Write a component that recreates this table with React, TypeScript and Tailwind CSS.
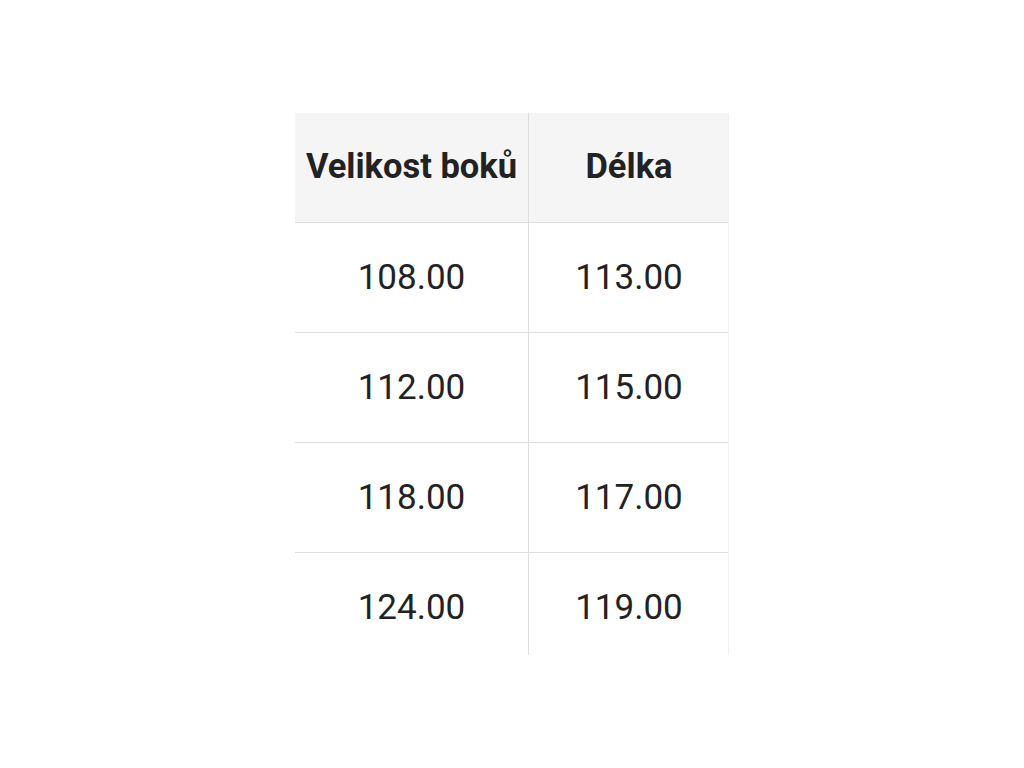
const HEAD = ['Velikost boků', 'Délka'];
const ROWS = [
  ['108.00', '113.00'],
  ['112.00', '115.00'],
  ['118.00', '117.00'],
  ['124.00', '119.00'],
];

export default function App() {
  return (
    <div className="flex h-[768px] w-full items-center justify-center bg-white font-['Roboto',sans-serif] text-[#222]">
      <div className="h-[542px] w-[434px] overflow-hidden border-r border-[#f0f0f0]">
        <div className="grid grid-cols-[234px_200px] border-b border-[#dedede] bg-[#f5f5f5]">
          {HEAD.map((h, i) => (
            <div key={h} className={`flex h-[109px] items-center justify-center pb-[2px] text-[34.5px] font-bold ${i === 0 ? 'border-r border-[#dedede]' : ''}`}>
              {h}
            </div>
          ))}
        </div>
        {ROWS.map((r, ri) => (
          <div key={ri} className="grid grid-cols-[234px_200px] border-b border-[#dedede]">
            {r.map((v, i) => (
              <div key={i} className={`flex h-[109px] items-center justify-center pt-[1px] text-[35px] ${i === 0 ? 'border-r border-[#dedede]' : ''}`}>
                {v}
              </div>
            ))}
          </div>
        ))}
      </div>
    </div>
  );
}
